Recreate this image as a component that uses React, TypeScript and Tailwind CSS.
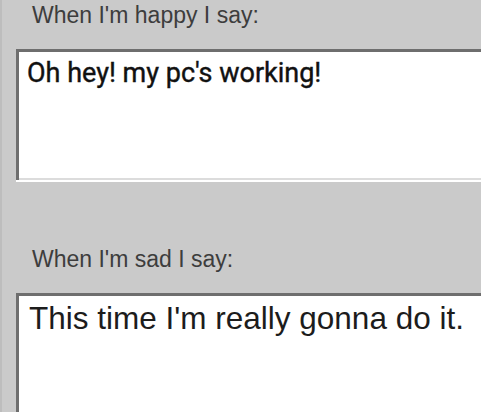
export default function App() {
  return (
    <div className="w-[481px] h-[412px] overflow-hidden bg-[#cacaca] border-l-2 border-[#bdbdbd] font-['Liberation_Sans',Arial,sans-serif]">
      <div className="pt-[4px] pl-[30px] text-[23px] leading-[23px] text-[#3d3d3d]">
        When I'm happy I say:
      </div>
      <div className="mt-[22px] ml-[14px] mr-[-10px] h-[131px] border-t-[3px] border-l-[3px] border-[#6e6e6e] bg-white shadow-[0_2px_0_#ffffff]">
        <div className="h-full border-b-2 border-[#dcdcdc] pt-[6px] pl-[8px] font-['Roboto',sans-serif] font-normal text-[27px] leading-[30px] text-[#111] [-webkit-text-stroke:0.4px_#111]">
          Oh hey! my pc's working!
        </div>
      </div>
      <div className="mt-[68px] pl-[30px] text-[23px] leading-[23px] text-[#3d3d3d]">
        When I'm sad I say:
      </div>
      <div className="mt-[22px] ml-[14px] mr-[-10px] h-[140px] border-t-[3px] border-l-[3px] border-[#6e6e6e] bg-white">
        <div className="pt-[7px] pl-[10px] text-[31.5px] leading-[31px] text-[#1c1c1c]">
          This time I'm really gonna do it.
        </div>
      </div>
    </div>
  );
}
